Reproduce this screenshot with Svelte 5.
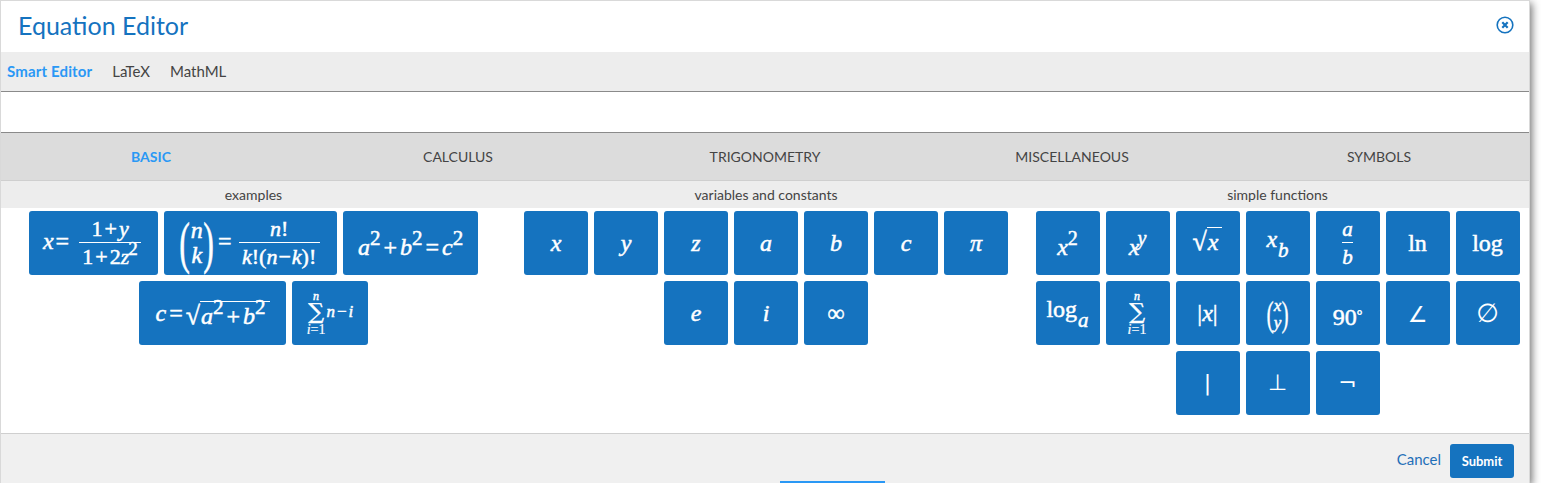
<script>
  const tabs = ['BASIC', 'CALCULUS', 'TRIGONOMETRY', 'MISCELLANEOUS', 'SYMBOLS'];
  const modes = ['Smart Editor', 'LaTeX', 'MathML'];
</script>

{#snippet sum()}
  <span class="sum"><i class="lim">n</i><span class="sigma">∑</span><span class="lim under-lim"><i>i</i>=1</span></span>
{/snippet}

<div class="dialog">
  <header class="title">
    <h1>Equation Editor</h1>
    <button class="close" aria-label="Close">
      <svg width="18" height="18" viewBox="0 0 18 18" fill="none" stroke="#1573bf">
        <circle cx="9" cy="9" r="7.8" stroke-width="1.6"/>
        <path d="M6.3 6.3l5.4 5.4M11.7 6.3l-5.4 5.4" stroke-width="2.2"/>
      </svg>
    </button>
  </header>

  <nav class="modes">
    {#each modes as m, i}<span class:on={i === 0}>{m}</span>{/each}
  </nav>

  <div class="input"></div>

  <nav class="tabs">
    {#each tabs as t, i}<span class:on={i === 0}>{t}</span>{/each}
  </nav>

  <main class="panels">
    <section>
      <h2>examples</h2>
      <div class="keys">
        <button class="k w129"><i>x</i><span class="op">=</span><span class="frac wide"><span><b>1</b><span class="op">+</span><i>y</i></span><span><b>1</b><span class="op">+</span><b>2</b><i>z</i><sup class="fs">2</sup></span></span></button>
        <button class="k w173"><span class="paren">(</span><span class="stack"><i>n</i><i>k</i></span><span class="paren">)</span><span class="op gap">=</span><span class="frac wide big"><span><i>n</i><b>!</b></span><span><i>k</i><b>!(</b><i>n</i><span class="op">−</span><i>k</i><b>)!</b></span></span></button>
        <button class="k w135 low roomy"><i>a</i><sup>2</sup><span class="op">+</span><i>b</i><sup>2</sup><span class="op">=</span><i>c</i><sup>2</sup></button>
        <button class="k w147 roomy"><i>c</i><span class="op">=</span><span class="root"><span class="radical">√</span><span class="under"><i>a</i><sup>2</sup><span class="op">+</span><i>b</i><sup>2</sup></span></span></button>
        <button class="k w76 tiny">{@render sum()}<i>n</i><span class="op">−</span><i>i</i></button>
      </div>
    </section>

    <section>
      <h2>variables and constants</h2>
      <div class="keys">
        {#each ['x', 'y', 'z', 'a', 'b', 'c', 'π', 'e', 'i'] as v}
          <button class="k"><i>{v}</i></button>
        {/each}
        <button class="k">∞</button>
      </div>
    </section>

    <section>
      <h2>simple functions</h2>
      <div class="keys">
        <button class="k low"><i>x</i><sup>2</sup></button>
        <button class="k low"><i>x</i><sup class="tight"><i>y</i></sup></button>
        <button class="k high"><span class="root"><span class="radical">√</span><span class="under"><i>x</i></span></span></button>
        <button class="k high"><i>x</i><sub><i>b</i></sub></button>
        <button class="k"><span class="frac small"><i>a</i><i>b</i></span></button>
        <button class="k"><b>ln</b></button>
        <button class="k"><b>log</b></button>
        <button class="k high"><b>log</b><sub><i>a</i></sub></button>
        <button class="k tiny">{@render sum()}</button>
        <button class="k"><b>|</b><i>x</i><b>|</b></button>
        <button class="k"><span class="paren mini">(</span><span class="stack mini"><i>x</i><i>y</i></span><span class="paren mini">)</span></button>
        <button class="k low"><b>90<span class="deg">°</span></b></button>
        <button class="k sym nudge">∠</button>
        <button class="k sym wide-sym">∅</button>
        <button class="k sym">|</button>
        <button class="k sym">⊥</button>
        <button class="k sym">¬</button>
      </div>
    </section>
  </main>

  <footer class="foot">
    <a href="#cancel">Cancel</a>
    <button class="submit">Submit</button>
    <span class="progress"></span>
  </footer>
</div>

<style>
  :global(body) { margin: 0; background: #fff; }
  .dialog {
    box-sizing: border-box;
    width: 1530px;
    height: 483px;
    border: 1px solid #d9d9d9;
    border-bottom: 0;
    background: #fff;
    box-shadow: 2px 3px 8px rgba(0, 0, 0, .55);
    font-family: Lato, sans-serif;
    color: #444;
    display: flex;
    flex-direction: column;
    position: relative;
  }
  .title {
    height: 51px;
    box-sizing: border-box;
    display: flex;
    align-items: center;
    justify-content: space-between;
    padding: 0 15px 4px 17px;
    flex: none;
  }
  h1 {
    margin: 0;
    font-size: 25px;
    font-weight: 400;
    color: #1573bf;
  }
  .close { all: unset; display: block; height: 18px; }
  .modes {
    height: 38px;
    flex: none;
    background: #ededed;
    border-bottom: 1px solid #8a8a8a;
    display: flex;
    align-items: center;
    gap: 20px;
    padding: 0 0 1px 6px;
    font-size: 15px;
  }
  .modes .on, .tabs .on { color: #2a98f5; font-weight: 700; }
  .modes .on { letter-spacing: .15px; }
  .input { height: 40px; flex: none; }
  .tabs {
    height: 47px;
    flex: none;
    background: #dcdcdc;
    border-top: 1px solid #8a8a8a;
    border-bottom: 1px solid #cfcfcf;
    display: grid;
    grid-template-columns: repeat(5, 307px);
    align-items: center;
    justify-items: center;
    font-size: 14px;
    text-indent: -7px;
  }
  .panels {
    flex: 1;
    display: grid;
    grid-template-columns: 505px 520px 503px;
  }
  h2 {
    margin: 0;
    height: 27px;
    line-height: 28px;
    background: #ededed;
    text-align: center;
    font-size: 14px;
    font-weight: 400;
    color: #444;
  }
  .keys {
    display: flex;
    flex-wrap: wrap;
    justify-content: center;
    align-content: flex-start;
    gap: 6px;
    padding-top: 3px;
  }
  .k {
    all: unset;
    box-sizing: border-box;
    display: block;
    width: 64px;
    height: 64px;
    text-align: center;
    background: #1573bf;
    border-radius: 3px;
    color: #fff;
    font-family: "Liberation Serif", serif;
    font-size: 24px;
    line-height: 40px;
    white-space: nowrap;
    overflow: hidden;
    -webkit-text-stroke: .5px #fff;
  }
  .k i { font-style: italic; }
  .k b { font-weight: 400; }
  .w129 { width: 129px; padding-right: 3px; }
  .w173 { width: 173px; padding-right: 2px; }
  .w135 { width: 135px; }
  .w147 { width: 147px; }
  .w76 { width: 76px; }
  .low { padding-top: 8px; }
  .high { padding-bottom: 8px; }
  .nudge { padding-top: 3px; }
  .op { margin: 0 2px; font-style: normal; }
  .op.gap { margin: 0 0 0 4px; }
  .roomy .op { margin: 0 3px; }
  .roomy sup { font-size: 21px; }
  sup { font-size: 20px; vertical-align: 10px; line-height: 0; }
  sup.tight { margin-left: -2px; }
  sup.fs { font-size: 19px; vertical-align: 9px; margin-left: -1px; }
  sub { font-size: 21px; vertical-align: -10px; line-height: 0; margin-left: 1px; }
  .frac {
    display: inline-flex;
    flex-direction: column;
    align-items: center;
    vertical-align: middle;
    font-size: 22px;
    line-height: 20px;
    margin-left: 8px;
  }
  .frac > :first-child { padding-bottom: 3px; border-bottom: 1px solid #fff; }
  .frac > :last-child { padding-top: 4px; }
  .frac.wide { min-width: 62px; }
  .frac.wide > * { display: block; align-self: stretch; text-align: center; }
  .frac.big .op { margin: 0 1px; }
  .frac.big { margin-left: 7px; min-width: 81px; }
  .frac.small { font-size: 21px; margin: 0; }
  .stack {
    display: inline-flex;
    flex-direction: column;
    align-items: center;
    vertical-align: middle;
    line-height: 25px;
  }
  .stack.mini { font-size: 17px; line-height: 17px; }
  .paren {
    display: inline-block;
    vertical-align: middle;
    font-size: 58px;
    line-height: 40px;
    transform: scaleX(.55);
    margin: 0 -4px;
    -webkit-text-stroke: .6px #fff;
  }
  .paren.mini { font-size: 36px; transform: scaleX(.6); margin: 0 -2px; -webkit-text-stroke: .3px #fff; }
  .root { display: inline-flex; align-items: flex-end; vertical-align: middle; line-height: 28px; }
  .radical { font-size: 26px; }
  .under { display: inline-block; border-top: 1px solid #fff; padding: 0 4px 0 1px; }
  .sum {
    display: inline-flex;
    flex-direction: column;
    align-items: center;
    vertical-align: middle;
    margin-right: 1px;
  }
  .sigma {
    font-family: "DejaVu Serif", serif;
    font-size: 22px;
    line-height: 22px;
    margin: 0 0 2px;
  }
  .lim { font-size: 12px; line-height: 10px; }
  .under-lim { font-size: 14px; -webkit-text-stroke: .2px #fff; }
  .tiny { font-size: 17px; }
  .deg { font-size: 14px; vertical-align: 5px; line-height: 0; }
  .sym { font-family: "DejaVu Sans", sans-serif; font-size: 22px; -webkit-text-stroke: 0; }
  .wide-sym { font-size: 26px; }
  .foot {
    flex: none;
    background: #f0f0f0;
    border-top: 1px solid #cfcfcf;
    display: flex;
    align-items: flex-start;
    justify-content: flex-end;
    gap: 9px;
    padding: 10px 15px 0 0;
    box-sizing: border-box;
    height: 50px;
    position: relative;
  }
  .foot a { color: #1f6fb8; font-size: 15px; text-decoration: none; margin-top: 6px; }
  .submit {
    all: unset;
    display: block;
    width: 64px;
    height: 34px;
    line-height: 34px;
    background: #1573bf;
    border-radius: 3px;
    color: #fff;
    font-size: 13px;
    font-weight: 700;
    text-align: center;
  }
  .progress {
    position: absolute;
    left: 779px;
    bottom: 0;
    width: 105px;
    height: 2px;
    background: #2a98f5;
  }
</style>
